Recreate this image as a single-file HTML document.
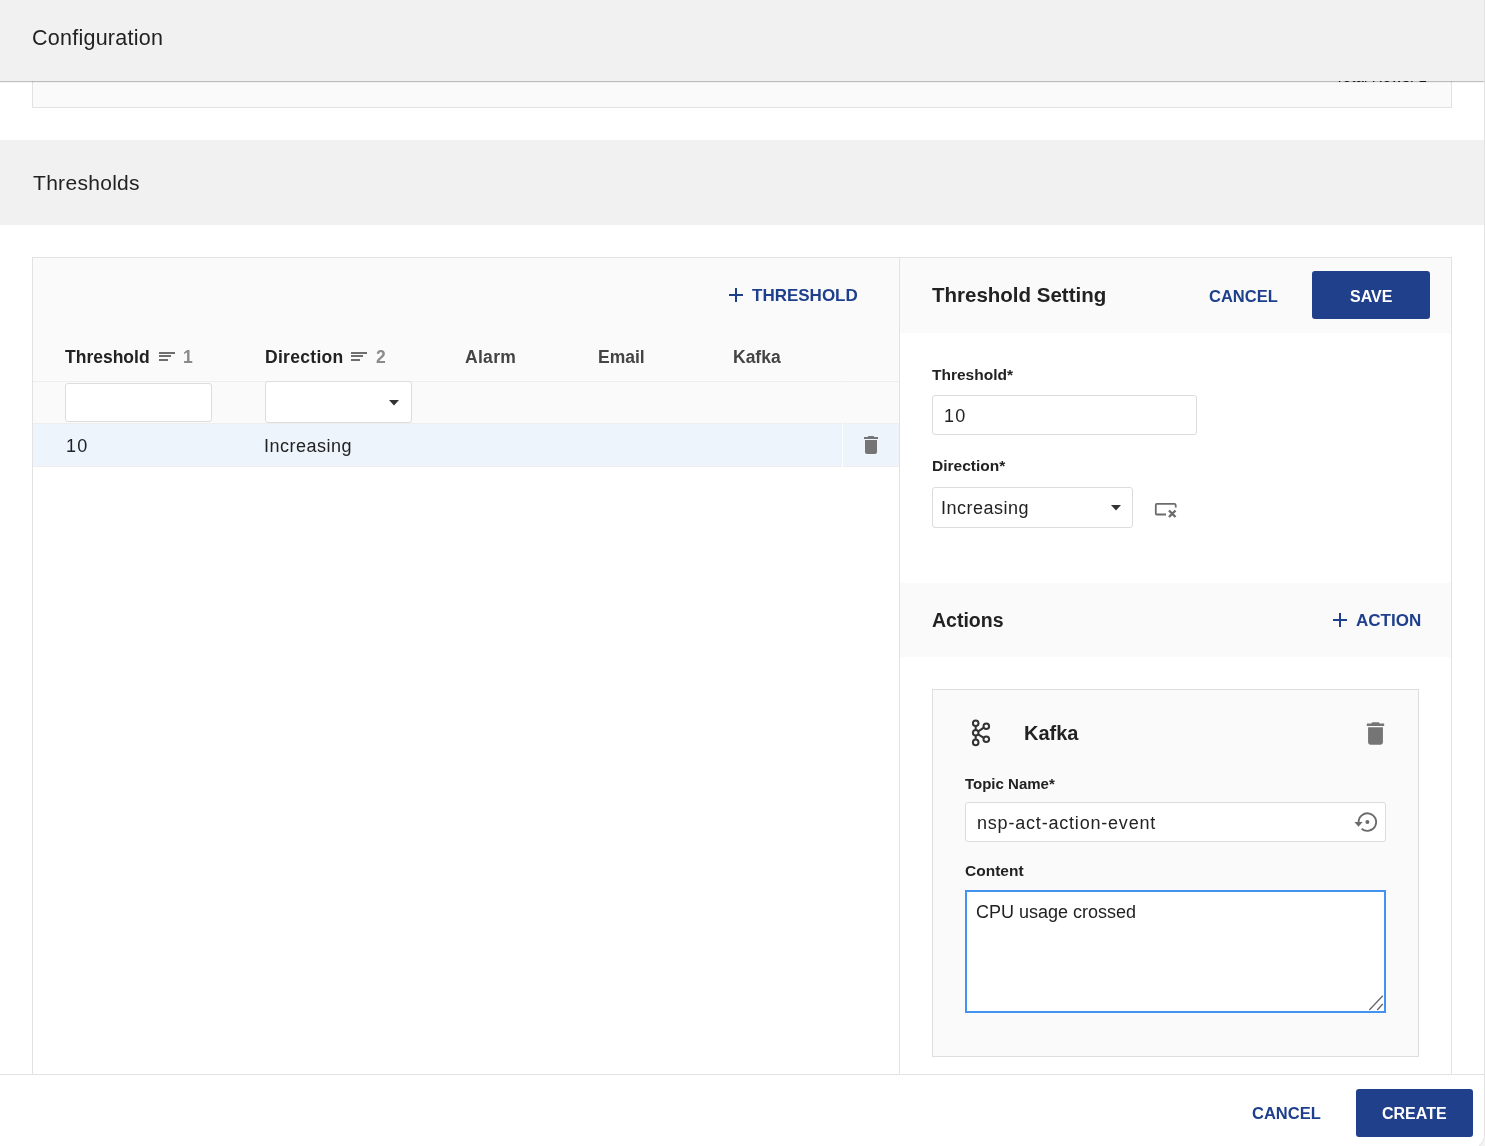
<!DOCTYPE html>
<html><head><meta charset="utf-8">
<style>
html,body{margin:0;padding:0;width:1485px;height:1146px;overflow:hidden;background:#f4f4f4;}
#dlg{position:absolute;left:0;top:0;width:1484px;height:1149px;background:#fff;border-right:1px solid #e3e3e3;border-bottom:1px solid #e3e3e3;border-bottom-right-radius:16px;overflow:hidden;}
body{position:relative;-webkit-font-smoothing:antialiased;font-family:"Liberation Sans",sans-serif;color:#222;}
.a{position:absolute;}
.t{position:absolute;will-change:transform;white-space:nowrap;line-height:1;}
.b{font-weight:bold;}
.blue{color:#1e3f8c;}
</style></head><body>
<div id="dlg">

<!-- previous section remnant -->
<div class="a" style="left:32px;top:40px;width:1418px;height:66px;background:#fafafa;border:1px solid #e2e2e2;"></div>
<div class="t" style="left:1335px;top:69px;font-size:15px;letter-spacing:0.15px;color:#222;">Total Rows: 1</div>

<!-- header -->
<div class="a" style="left:0;top:0;width:1484px;height:81px;background:#f1f1f1;"></div>
<div class="a" style="left:0;top:81px;width:1484px;height:1px;background:rgba(0,0,0,0.25);"></div>
<div class="a" style="left:0;top:82px;width:1484px;height:1px;background:rgba(0,0,0,0.04);"></div>
<div class="t" style="left:32px;top:28px;font-size:21.5px;letter-spacing:0.25px;">Configuration</div>

<!-- thresholds band -->
<div class="a" style="left:0;top:140px;width:1484px;height:85px;background:#f1f1f1;"></div>
<div class="t" style="left:33px;top:172px;font-size:21px;letter-spacing:0.3px;">Thresholds</div>

<!-- table container -->
<div class="a" style="left:32px;top:257px;width:1418px;height:900px;border:1px solid #e2e2e2;background:#fff;"></div>
<!-- left pane bg -->
<div class="a" style="left:33px;top:258px;width:866px;height:165px;background:#fafafa;"></div>
<div class="a" style="left:33px;top:381px;width:866px;height:1px;background:#eeeeee;"></div>
<div class="a" style="left:33px;top:423px;width:866px;height:1px;background:#eeeeee;"></div>
<div class="a" style="left:33px;top:424px;width:866px;height:42px;background:#edf4fc;"></div>
<div class="a" style="left:33px;top:466px;width:866px;height:1px;background:#eeeeee;"></div>
<div class="a" style="left:842px;top:381px;width:1px;height:1px;background:#fafafa;"></div>
<div class="a" style="left:842px;top:423px;width:1px;height:44px;background:#fff;"></div>
<!-- divider -->
<div class="a" style="left:899px;top:258px;width:1px;height:900px;background:#e2e2e2;"></div>

<!-- + THRESHOLD -->
<div class="a" style="left:729px;top:294px;width:14px;height:2px;background:#1e3f8c;"></div>
<div class="a" style="left:735px;top:288px;width:2px;height:14px;background:#1e3f8c;"></div>
<div class="t b blue" style="left:752px;top:287px;font-size:17px;">THRESHOLD</div>

<!-- column headers -->
<div class="t b" style="left:65px;top:349px;font-size:17.5px;">Threshold</div>
<div class="a" style="left:159px;top:352px;width:16px;height:2px;background:#6e6e6e;"></div>
<div class="a" style="left:159px;top:355px;width:12px;height:2px;background:#6e6e6e;"></div>
<div class="a" style="left:159px;top:359px;width:9px;height:2px;background:#6e6e6e;"></div>
<div class="t b" style="left:183px;top:349px;font-size:17.5px;color:#8a8a8a;">1</div>

<div class="t b" style="left:265px;top:349px;font-size:17.5px;letter-spacing:0.3px;">Direction</div>
<div class="a" style="left:351px;top:352px;width:16px;height:2px;background:#6e6e6e;"></div>
<div class="a" style="left:351px;top:355px;width:12px;height:2px;background:#6e6e6e;"></div>
<div class="a" style="left:351px;top:359px;width:9px;height:2px;background:#6e6e6e;"></div>
<div class="t b" style="left:376px;top:349px;font-size:17.5px;color:#8a8a8a;">2</div>

<div class="t b" style="left:465px;top:349px;font-size:17.5px;color:#444;letter-spacing:0.3px;">Alarm</div>
<div class="t b" style="left:598px;top:349px;font-size:17.5px;color:#444;">Email</div>
<div class="t b" style="left:733px;top:349px;font-size:17.5px;color:#444;">Kafka</div>

<!-- filter inputs -->
<div class="a" style="left:65px;top:383px;width:145px;height:37px;background:#fff;border:1px solid #dddddd;border-radius:3px;"></div>
<div class="a" style="left:265px;top:381px;width:145px;height:40px;background:#fff;border:1px solid #dddddd;border-radius:3px;"></div>
<svg class="a" style="left:389px;top:400px;" width="10" height="6"><path d="M0 0H10L5 5.5Z" fill="#333"/></svg>

<!-- data row -->
<div class="t" style="left:66px;top:437px;font-size:18px;letter-spacing:1.2px;">10</div>
<div class="t" style="left:264px;top:437px;font-size:18px;letter-spacing:0.5px;">Increasing</div>
<svg class="a" style="left:859px;top:433px;" width="24" height="24" viewBox="0 0 24 24"><path fill="#757575" d="M6 19c0 1.1.9 2 2 2h8c1.1 0 2-.9 2-2V7H6v12zM19 4h-3.5l-1-1h-5l-1 1H5v2h14V4z"/></svg>

<!-- right pane -->
<div class="a" style="left:900px;top:258px;width:551px;height:75px;background:#fafafa;"></div>
<div class="t b" style="left:932px;top:285px;font-size:20.5px;">Threshold Setting</div>
<div class="t b blue" style="left:1209px;top:288px;font-size:16.5px;">CANCEL</div>
<div class="a" style="left:1312px;top:271px;width:118px;height:48px;background:#21408b;border-radius:3px;"></div>
<div class="t b" style="left:1350px;top:288.5px;font-size:16px;color:#fff;">SAVE</div>

<div class="t b" style="left:932px;top:367px;font-size:15.5px;">Threshold*</div>
<div class="a" style="left:932px;top:395px;width:263px;height:38px;border:1px solid #dcdcdc;border-radius:3px;background:#fff;"></div>
<div class="t" style="left:944px;top:407px;font-size:18px;letter-spacing:1.2px;">10</div>

<div class="t b" style="left:932px;top:458px;font-size:15.5px;">Direction*</div>
<div class="a" style="left:932px;top:487px;width:199px;height:39px;border:1px solid #dcdcdc;border-radius:3px;background:#fff;"></div>
<div class="t" style="left:941px;top:499px;font-size:18px;letter-spacing:0.5px;">Increasing</div>
<svg class="a" style="left:1111px;top:505px;" width="10" height="6"><path d="M0 0H10L5 5.5Z" fill="#333"/></svg>
<svg class="a" style="left:1148px;top:495px;" width="36" height="30" viewBox="1148 495 36 30">
  <path d="M1166 514.5H1156.8Q1155.8 514.5 1155.8 513.5V504.9Q1155.8 503.9 1156.8 503.9H1174.6Q1175.4 503.9 1175.6 504.9L1175.8 507.5" fill="none" stroke="#6b6b6b" stroke-width="1.8"/>
  <path d="M1169 510.5L1175.5 517M1175.5 510.5L1169 517" stroke="#6b6b6b" stroke-width="2.4"/>
</svg>

<!-- actions band -->
<div class="a" style="left:900px;top:583px;width:551px;height:74px;background:#fafafa;"></div>
<div class="t b" style="left:932px;top:611px;font-size:19.5px;">Actions</div>
<div class="a" style="left:1333px;top:619px;width:14px;height:2px;background:#1e3f8c;"></div>
<div class="a" style="left:1339px;top:613px;width:2px;height:14px;background:#1e3f8c;"></div>
<div class="t b blue" style="left:1356px;top:612px;font-size:17px;">ACTION</div>

<!-- kafka card -->
<div class="a" style="left:932px;top:689px;width:485px;height:366px;border:1px solid #dedede;background:#fafafa;"></div>
<svg class="a" style="left:968px;top:716px;" width="26" height="34" viewBox="968 716 26 34">
  <g fill="none" stroke="#333" stroke-width="2">
    <circle cx="975.7" cy="723.2" r="2.8"/>
    <circle cx="975.7" cy="732.8" r="2.8"/>
    <circle cx="975.7" cy="742.4" r="2.8"/>
    <circle cx="986.3" cy="726.2" r="2.8"/>
    <circle cx="986.3" cy="739.3" r="2.8"/>
    <path d="M975.7 726V730M975.7 735.6V739.6M978.2 731.3L983.8 727.7M978.2 734.3L983.8 737.8"/>
  </g>
</svg>
<div class="t b" style="left:1024px;top:723px;font-size:20px;">Kafka</div>
<svg class="a" style="left:1362px;top:720px;" width="27" height="27" viewBox="0 0 24 24"><path fill="#757575" d="M6 19c0 1.1.9 2 2 2h8c1.1 0 2-.9 2-2V7H6v12zM19 4h-3.5l-1-1h-5l-1 1H5v2h14V4z" transform="translate(12 12) scale(1.1) translate(-12 -12)"/></svg>

<div class="t b" style="left:965px;top:776px;font-size:15px;">Topic Name*</div>
<div class="a" style="left:965px;top:802px;width:419px;height:38px;border:1px solid #dcdcdc;border-radius:3px;background:#fff;"></div>
<div class="t" style="left:977px;top:814px;font-size:18px;letter-spacing:0.8px;">nsp-act-action-event</div>
<svg class="a" style="left:1350px;top:810px;" width="32" height="26" viewBox="1350 810 32 26">
  <path d="M1358.6 822.1A8.8 8.8 0 1 1 1361.6 828.7" fill="none" stroke="#6b6b6b" stroke-width="1.8"/>
  <path d="M1354.4 822H1362.6L1358.5 826.8Z" fill="#6b6b6b"/>
  <circle cx="1367.4" cy="822.1" r="2" fill="#6b6b6b"/>
</svg>

<div class="t b" style="left:965px;top:863px;font-size:15.5px;">Content</div>
<div class="a" style="left:965px;top:890px;width:417px;height:119px;border:2px solid #4493f0;background:#fff;"></div>
<div class="t" style="left:976px;top:903px;font-size:18px;">CPU usage crossed</div>
<svg class="a" style="left:1366px;top:993px;" width="18" height="18" viewBox="1366 993 18 18">
  <path d="M1369.3 1010L1382.8 995.8M1377.2 1010L1382.8 1004" stroke="#666" stroke-width="1.3"/>
</svg>

<!-- footer -->
<div class="a" style="left:0;top:1074px;width:1484px;height:72px;background:#fff;border-top:1px solid #e2e2e2;"></div>
<div class="t b blue" style="left:1252px;top:1105px;font-size:16.5px;">CANCEL</div>
<div class="a" style="left:1356px;top:1089px;width:117px;height:48px;background:#21408b;border-radius:3px;"></div>
<div class="t b" style="left:1382px;top:1106px;font-size:16px;color:#fff;">CREATE</div>


</div>
</body></html>
